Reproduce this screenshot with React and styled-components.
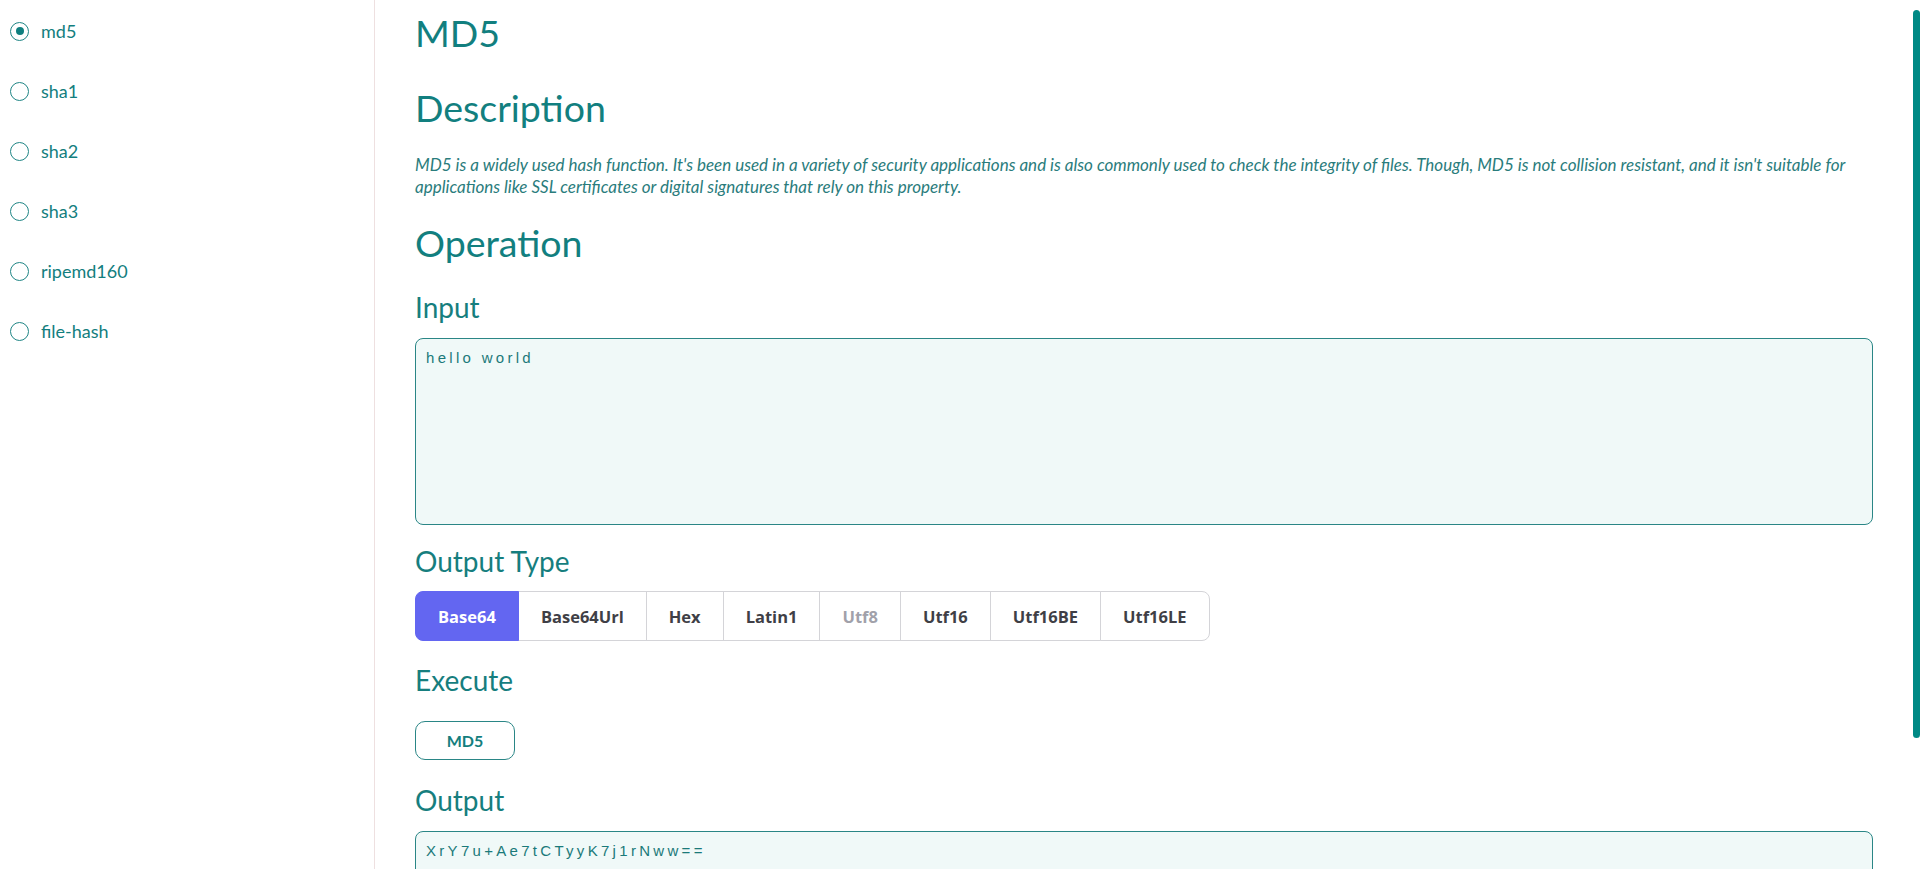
import React, { useState } from 'react';
import styled, { createGlobalStyle } from 'styled-components';

const Global = createGlobalStyle`
  html { scrollbar-width: none; }
  html::-webkit-scrollbar { display: none; }
  * { box-sizing: border-box; }
  body {
    margin: 0;
    background: #ffffff;
    font-family: Lato, "Open Sans", sans-serif;
    color: #137e7e;
  }
`;

const Layout = styled.div`
  display: grid;
  grid-template-columns: 375px 1fr;
  min-height: 100vh;
`;

const ScrollThumb = styled.div`
  position: fixed;
  top: 10px;
  right: 0;
  width: 7px;
  height: 728px;
  border-radius: 4px;
  background: #008985;
  z-index: 10;
`;

const Sidebar = styled.nav`
  border-right: 1px solid #eee0e0;
  padding: 1px 0 0 10px;
  display: flex;
  flex-direction: column;
`;

const RadioRow = styled.label`
  display: flex;
  align-items: center;
  gap: 12px;
  height: 60px;
  font-size: 18px;
  color: #137e7e;
  cursor: pointer;
`;

const RadioInput = styled.input`
  position: absolute;
  opacity: 0;
  width: 0;
  height: 0;
  margin: 0;
`;

const RadioDot = styled.span`
  width: 19px;
  height: 19px;
  border-radius: 50%;
  border: 1px solid #1f8585;
  display: flex;
  align-items: center;
  justify-content: center;
  flex: none;
  &::after {
    content: '';
    width: 8px;
    height: 8px;
    border-radius: 50%;
    background: ${(p) => (p.$checked ? '#0f7f7f' : 'transparent')};
  }
`;

const Main = styled.main`
  padding: 11px 47px 32px 40px;
  display: flex;
  flex-direction: column;
  align-items: flex-start;
  min-width: 0;
`;

const Title = styled.h1`
  margin: 0;
  font-size: 37.5px;
  line-height: 43px;
  font-weight: 400;
  color: #127f7f;
`;

const Heading = styled.h2`
  margin: ${(p) => p.$mt || 0}px 0 0 0;
  font-size: 37.5px;
  line-height: 43px;
  font-weight: 400;
  color: #127f7f;
`;

const Paragraph = styled.p`
  margin: 25px 0 0 0;
  font-style: italic;
  font-size: 17px;
  line-height: 22px;
  color: #2a7c7c;
  width: 100%;
`;

const Label = styled.h3`
  margin: ${(p) => p.$mt}px 0 ${(p) => p.$mb}px 0;
  font-size: 28px;
  line-height: 31px;
  font-weight: 400;
  color: #167e7e;
`;

const TextBox = styled.textarea`
  display: block;
  width: 100%;
  height: ${(p) => p.$h}px;
  resize: none;
  border: 1px solid #2a8686;
  border-radius: 8px;
  background: #f0f9f8;
  padding: 10px;
  font-family: "Liberation Sans", Arial, sans-serif;
  font-size: 15px;
  letter-spacing: 3.3px;
  color: #1b7a7a;
  outline: none;
`;

const ButtonGroup = styled.div`
  display: inline-flex;
  height: 50px;
`;

const TypeButton = styled.button`
  position: relative;
  z-index: ${(p) => (p.$active ? 1 : 0)};
  height: 50px;
  padding: 0 22px;
  margin-left: ${(p) => (p.$first ? 0 : -1)}px;
  border: 1px solid ${(p) => (p.$active ? '#6366f1' : '#d4d4d8')};
  border-radius: ${(p) => (p.$first ? '8px 0 0 8px' : p.$last ? '0 8px 8px 0' : '0')};
  background: ${(p) => (p.$active ? '#6366f1' : '#ffffff')};
  color: ${(p) => (p.$active ? '#ffffff' : p.$disabled ? '#a1a1aa' : '#3f3f46')};
  font-family: "Open Sans", sans-serif;
  font-weight: 700;
  font-size: 16.5px;
  cursor: ${(p) => (p.$disabled ? 'default' : 'pointer')};
`;

const ExecButton = styled.button`
  width: 100px;
  height: 39px;
  border: 1px solid #2a8686;
  border-radius: 10px;
  background: #ffffff;
  color: #137e7e;
  font-family: Lato, sans-serif;
  font-weight: 700;
  font-size: 16px;
  cursor: pointer;
`;

const algos = ['md5', 'sha1', 'sha2', 'sha3', 'ripemd160', 'file-hash'];
const types = ['Base64', 'Base64Url', 'Hex', 'Latin1', 'Utf8', 'Utf16', 'Utf16BE', 'Utf16LE'];

export default function App() {
  const [algo, setAlgo] = useState('md5');
  const [type, setType] = useState('Base64');
  return (
    <>
      <Global />
      <ScrollThumb aria-hidden="true" />
      <Layout>
        <Sidebar>
          {algos.map((a) => (
            <RadioRow key={a}>
              <RadioInput type="radio" name="algo" checked={algo === a} onChange={() => setAlgo(a)} />
              <RadioDot $checked={algo === a} />
              {a}
            </RadioRow>
          ))}
        </Sidebar>
        <Main>
          <Title>MD5</Title>
          <Heading $mt={32}>Description</Heading>
          <Paragraph>
            MD5 is a widely used hash function. It's been used in a variety of security applications and is also commonly used to check the integrity of files. Though, MD5 is not collision resistant, and it isn't suitable for applications like SSL certificates or digital signatures that rely on this property.
          </Paragraph>
          <Heading $mt={23}>Operation</Heading>
          <Label $mt={28} $mb={15}>Input</Label>
          <TextBox $h={187} defaultValue="hello world" />
          <Label $mt={21} $mb={14}>Output Type</Label>
          <ButtonGroup>
            {types.map((t, i) => (
              <TypeButton
                key={t}
                $first={i === 0}
                $last={i === types.length - 1}
                $active={type === t}
                $disabled={t === 'Utf8'}
                onClick={() => t !== 'Utf8' && setType(t)}
              >
                {t}
              </TypeButton>
            ))}
          </ButtonGroup>
          <Label $mt={24} $mb={25}>Execute</Label>
          <ExecButton>MD5</ExecButton>
          <Label $mt={25} $mb={15}>Output</Label>
          <TextBox $h={150} readOnly value="XrY7u+Ae7tCTyyK7j1rNww==" />
        </Main>
      </Layout>
    </>
  );
}
